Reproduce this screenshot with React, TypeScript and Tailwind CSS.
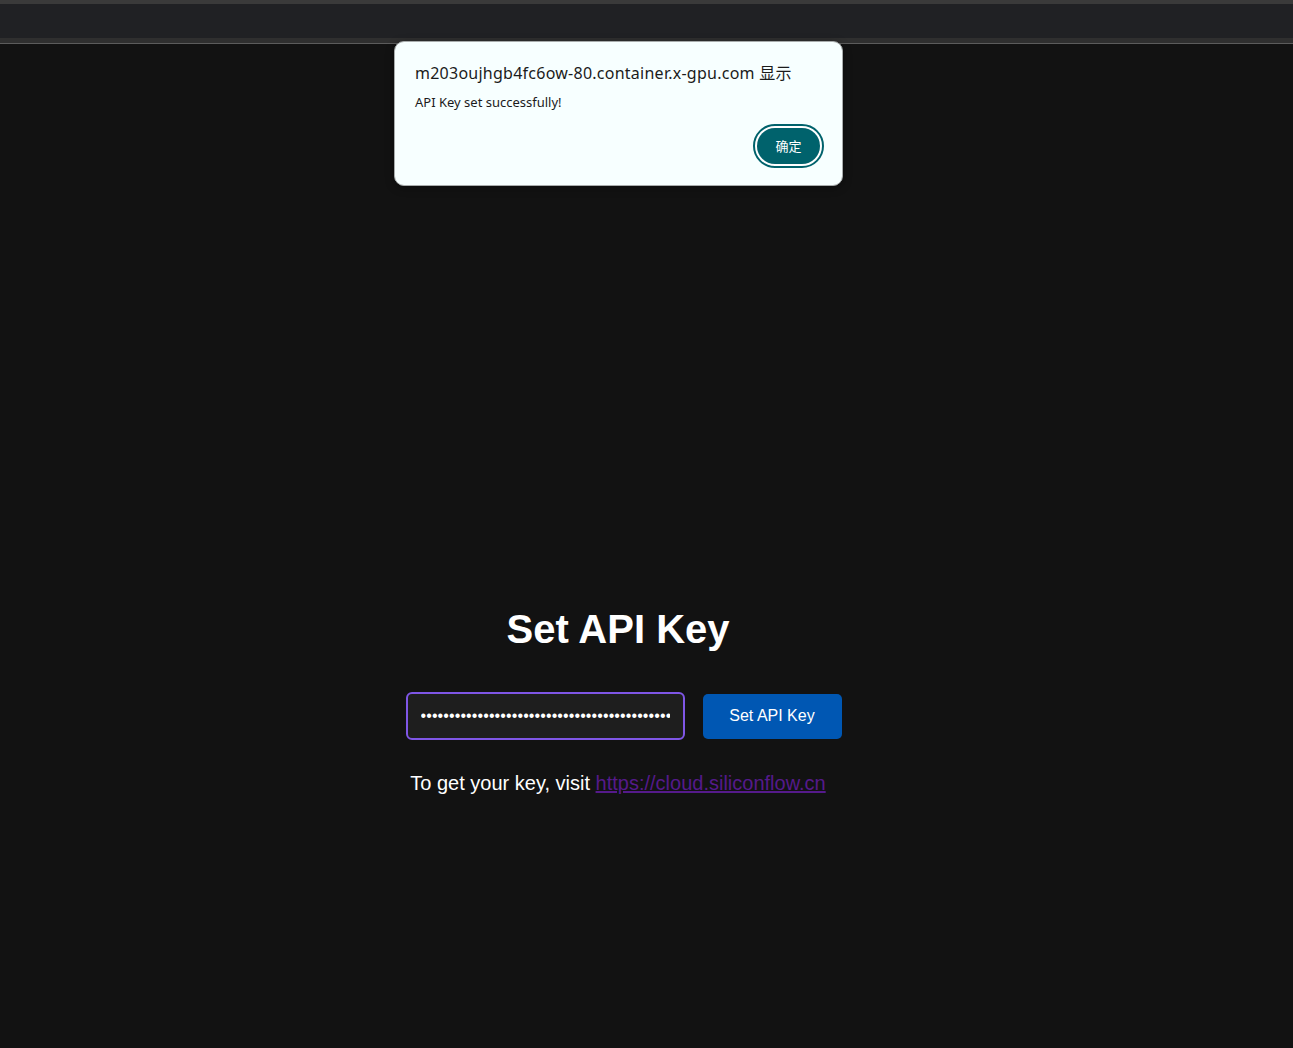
import { useState } from "react";

export default function App() {
  const [apiKey, setApiKey] = useState("sk-" + "x".repeat(41));

  return (
    <div className="relative min-h-screen bg-[#121212] font-['Liberation_Sans',Arial,sans-serif]">
      {/* browser chrome strip */}
      <div className="h-[4px] bg-[#3a3a3a]" />
      <div className="h-[34px] bg-[#202124]" />
      <div className="h-[5px] bg-[#2f2f2f]" />
      <div className="h-[1px] bg-[#5c5c5c]" />

      <main className="flex flex-col items-center pr-[57px] pt-[563px] text-white">
        <h1 className="text-[40px] font-bold leading-[45px]">Set API Key</h1>

        <div className="ml-[11px] mt-[40px] flex items-center gap-[18px]">
          <input
            type="password"
            value={apiKey}
            onChange={(e) => setApiKey(e.target.value)}
            className="h-[48px] w-[279px] rounded-[6px] border-2 border-[#7f56e6] bg-[#1e1e1e] px-[13px] text-[16px] tracking-[0.1px] text-white outline-none"
          />
          <button className="h-[45px] w-[139px] rounded-[5px] bg-[#0057b3] text-[16px] text-white">
            Set API Key
          </button>
        </div>

        <p className="mt-[32px] text-[20px] leading-[23px]">
          To get your key, visit{" "}
          <a href="#" className="text-[#551a8b] underline">
            https://cloud.siliconflow.cn
          </a>
        </p>
      </main>

      {/* alert dialog */}
      <div className="absolute left-[394px] top-[41px] h-[145px] w-[449px] rounded-[10px] border border-[#a8acac] bg-[#f7ffff] px-[20px] pt-[20px] font-['Noto_Sans','Noto_Sans_CJK_SC',sans-serif] shadow-[0_2px_8px_rgba(0,0,0,0.35)]">
        <div className="text-[16px] leading-[22px] tracking-[0.25px] text-[#1b1b1b]">
          m203oujhgb4fc6ow-80.container.x-gpu.com 显示
        </div>
        <div className="mt-[9px] text-[13px] leading-[18px] text-[#1b1b1b]">
          API Key set successfully!
        </div>
        <div className="mt-[13px] flex justify-end">
          <button className="-mr-[2px] flex h-[44px] w-[71px] items-center justify-center rounded-full border-2 border-[#00626c] bg-white p-[2px]">
            <span className="flex h-full w-full items-center justify-center rounded-full bg-[#00626c] text-[13px] text-white font-['Noto_Sans_CJK_SC',sans-serif]">
              确定
            </span>
          </button>
        </div>
      </div>
    </div>
  );
}
